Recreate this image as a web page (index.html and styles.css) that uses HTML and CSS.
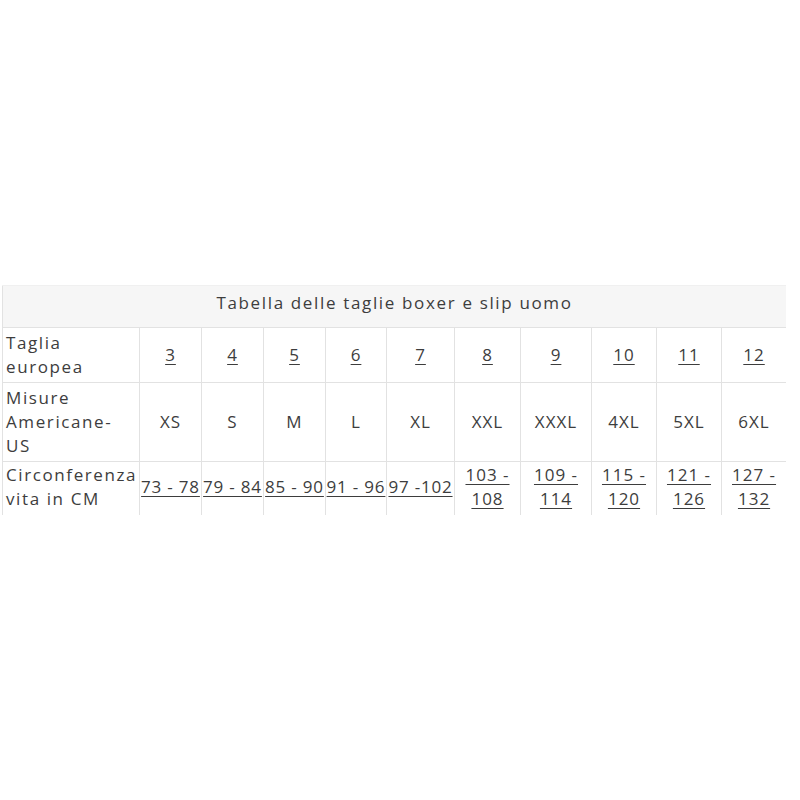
FILE: index.html
```html
<!DOCTYPE html>
<html lang="it">
<head>
<meta charset="utf-8">
<title>Tabella delle taglie</title>
<link rel="stylesheet" href="styles.css">
</head>
<body>
<div class="page">
  <div class="clip">
    <table class="sizes">
      <colgroup>
        <col class="c-label">
        <col class="c62"><col class="c62"><col class="c62"><col class="c61">
        <col class="c68"><col class="c66"><col class="c71">
        <col class="c65"><col class="c65"><col class="c65">
      </colgroup>
      <thead>
        <tr><th colspan="11" class="title">Tabella delle taglie boxer e slip uomo</th></tr>
      </thead>
      <tbody>
        <tr class="r1">
          <td class="label">Taglia<br>europea</td>
          <td><a>3</a></td><td><a>4</a></td><td><a>5</a></td><td><a>6</a></td><td><a>7</a></td>
          <td><a>8</a></td><td><a>9</a></td><td><a>10</a></td><td><a>11</a></td><td><a>12</a></td>
        </tr>
        <tr class="r2">
          <td class="label">Misure<br>Americane-<br>US</td>
          <td>XS</td><td>S</td><td>M</td><td>L</td><td>XL</td>
          <td>XXL</td><td>XXXL</td><td>4XL</td><td>5XL</td><td>6XL</td>
        </tr>
        <tr class="r3">
          <td class="label">Circonferenza<br>vita in CM</td>
          <td class="tight"><a>73 - 78</a></td><td class="tight"><a>79 - 84</a></td><td class="tight"><a>85 - 90</a></td><td class="tight"><a>91 - 96</a></td><td class="tight"><a>97 -102</a></td>
          <td><a>103 -<br>108</a></td><td><a>109 -<br>114</a></td><td><a>115 -<br>120</a></td><td><a>121 -<br>126</a></td><td><a>127 -<br>132</a></td>
        </tr>
      </tbody>
    </table>
  </div>
</div>
</body>
</html>
```
FILE: styles.css
```css
html, body {
  margin: 0;
  padding: 0;
  background: #ffffff;
}
.page {
  padding: 285px 0 0 2px;
  width: 784px;
}
.clip {
  height: 230px;
  overflow: hidden;
}
.sizes {
  width: 785px;
  table-layout: fixed;
  border-collapse: collapse;
  font-family: "Open Sans", "DejaVu Sans", sans-serif;
  font-size: 17px;
  letter-spacing: 1.5px;
  color: #3d3d3d;
  line-height: 24px;
}
.c-label { width: 137px; }
.c62 { width: 62px; }
.c61 { width: 61px; }
.c68 { width: 68px; }
.c66 { width: 66px; }
.c71 { width: 71px; }
.c65 { width: 65px; }
.sizes th, .sizes td {
  border: 1px solid #e2e2e2;
  padding: 3px 1px;
  text-align: center;
  vertical-align: middle;
  font-weight: 400;
}
.sizes .title {
  background: #f6f6f6;
  height: 34px;
  padding: 0 0 7px;
  letter-spacing: 1.65px;
  border-top-color: #f0f0f0;
}
.r1 td { height: 47px; }
.r2 td { height: 72px; }
.r3 td { height: 44px; padding-top: 1px; padding-bottom: 5px; }
.r1 td, .r2 td, .r3 td { letter-spacing: 1px; }
.sizes .label {
  text-align: left;
  padding-left: 3px;
  padding-right: 0;
  letter-spacing: 1.6px;
}
.sizes .tight {
  padding-left: 0;
  padding-right: 0;
  white-space: nowrap;
  letter-spacing: 0.8px;
}
.sizes a {
  text-decoration: underline;
  text-underline-offset: 3px;
  text-decoration-thickness: 1px;
  color: inherit;
}
```
